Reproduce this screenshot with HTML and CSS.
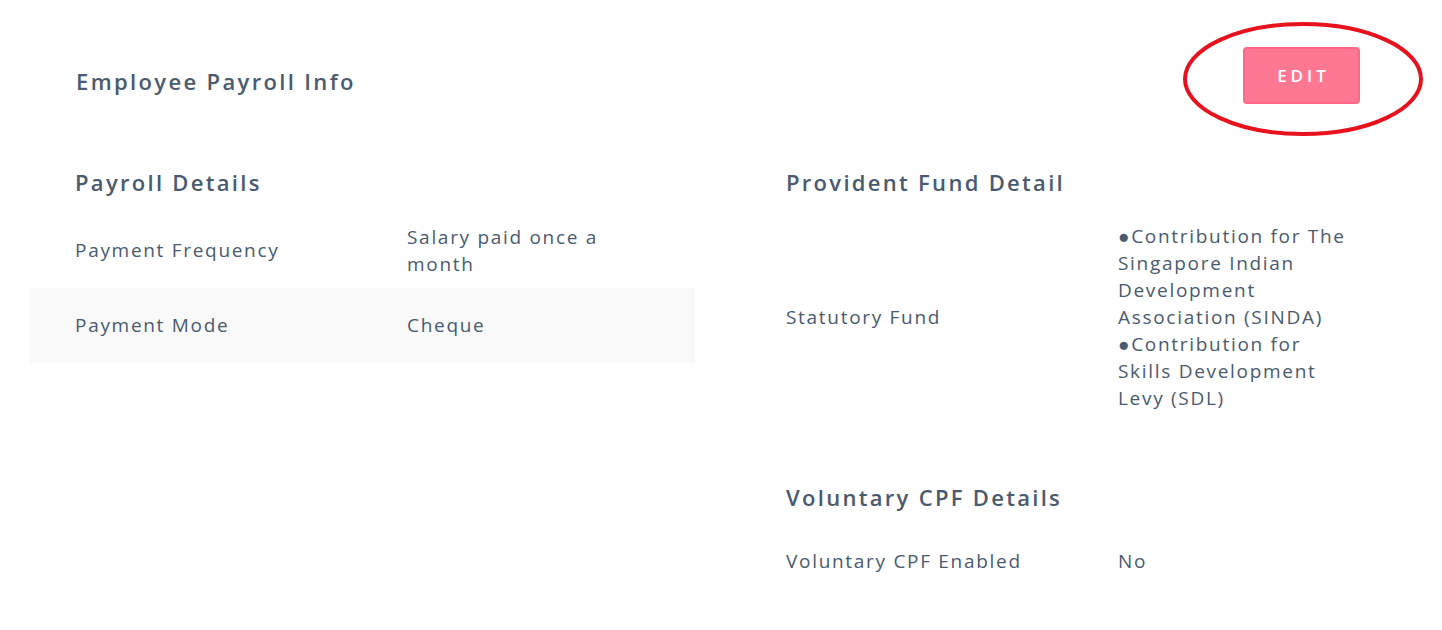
FILE: index.html
```html
<!DOCTYPE html>
<html lang="en">
<head>
<meta charset="utf-8">
<title>Employee Payroll Info</title>
<link rel="stylesheet" href="styles.css">
</head>
<body>
<div class="page">
  <header class="top">
    <h1 class="title">Employee Payroll Info</h1>
    <button class="edit-btn" type="button">EDIT</button>
  </header>
  <svg class="annot" width="250" height="124" viewBox="0 0 250 124" aria-hidden="true">
    <ellipse cx="125" cy="62" rx="118" ry="55" fill="none" stroke="#e8111e" stroke-width="4"/>
  </svg>
  <div class="cols">
    <section class="col">
      <h2 class="sec-title">Payroll Details</h2>
      <div class="row">
        <div class="label">Payment Frequency</div>
        <div class="value">Salary paid once a<br>month</div>
      </div>
      <div class="row alt">
        <div class="label">Payment Mode</div>
        <div class="value">Cheque</div>
      </div>
    </section>
    <section class="col">
      <h2 class="sec-title">Provident Fund Detail</h2>
      <div class="row">
        <div class="label">Statutory Fund</div>
        <div class="value">●Contribution for The<br>Singapore Indian<br>Development<br>Association (SINDA)<br>●Contribution for<br>Skills Development<br>Levy (SDL)</div>
      </div>
      <h2 class="sec-title sec-gap">Voluntary CPF Details</h2>
      <div class="row">
        <div class="label">Voluntary CPF Enabled</div>
        <div class="value">No</div>
      </div>
    </section>
  </div>
</div>
</body>
</html>
```

FILE: styles.css
```css
* { box-sizing: border-box; }
html, body { margin: 0; padding: 0; background: #ffffff; }
body {
  font-family: "Open Sans", "Liberation Sans", sans-serif;
  color: #4a5a6f;
  width: 1442px;
  height: 630px;
  overflow: hidden;
}
.page { position: relative; }
.top {
  display: flex;
  justify-content: space-between;
  align-items: center;
  padding: 47px 82px 0 76px;
}
.title {
  margin: 0;
  padding-top: 10px;
  font-size: 22px;
  line-height: 30px;
  font-weight: 600;
  letter-spacing: 2.35px;
}
.edit-btn {
  width: 117px;
  height: 57px;
  background: #ff7893;
  border: 2px solid #ff6786;
  border-radius: 4px;
  color: #ffffff;
  font-family: "Open Sans", "Liberation Sans", sans-serif;
  font-size: 17px;
  font-weight: 600;
  letter-spacing: 4px;
  padding: 0 0 0 4px;
}
.annot {
  position: absolute;
  left: 1178px;
  top: 17px;
}
.cols {
  display: flex;
  gap: 46px;
  padding: 63px 0 0 30px;
}
.col { width: 665px; }
.sec-title {
  margin: 0 0 16px;
  padding: 0 45px;
  font-size: 22px;
  line-height: 30px;
  font-weight: 600;
  letter-spacing: 2.3px;
}
.sec-gap { margin-top: 60px; margin-bottom: 12px; }
.row {
  display: grid;
  grid-template-columns: 332px 1fr;
  align-items: center;
  min-height: 75px;
  padding: 10px 45px;
  font-size: 19px;
  font-weight: 500;
  line-height: 27px;
  letter-spacing: 1.7px;
}
.row.alt { background: #f9f9f9; }
.value { white-space: nowrap; }
```
